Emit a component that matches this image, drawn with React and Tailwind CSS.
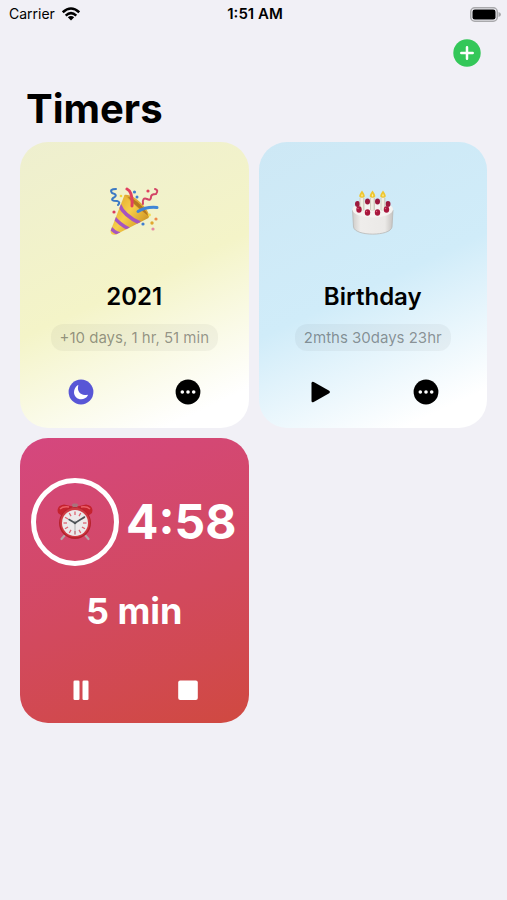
const PartyIcon = () => (
  <svg viewBox="0 0 50 50" className="size-[50px]" aria-hidden="true">
    <defs>
      <linearGradient id="cone" x1="0" y1="0.2" x2="1" y2="1">
        <stop offset="0" stopColor="#dfa52c" />
        <stop offset="0.4" stopColor="#f7cf4a" />
        <stop offset="0.7" stopColor="#dba62f" />
        <stop offset="1" stopColor="#a36f1a" />
      </linearGradient>
      <clipPath id="coneClip">
        <path d="M15.500 8 C21 7 38 22 39.500 31 L7 47.500 Q2 49 1.500 44 Z" />
      </clipPath>
    </defs>
    <path
      d="M15.500 8 C21 7 38 22 39.500 31 L7 47.500 Q2 49 1.500 44 Z"
      fill="url(#cone)"
    />
    <g clipPath="url(#coneClip)" fill="none" stroke="#a655c0" strokeWidth="3.600">
      <path d="M10 17 Q15 29 31 36" />
      <path d="M4 29 Q10 37 20 42" />
      <path d="M0 39 Q4 45 11 47" />
    </g>
    <path
      d="M15.500 8 C24 6 42 23 40 31 C36 26 23 17 15.500 8Z"
      fill="#e0a833"
    />
    <path d="M19 10 C26 11 38 23 39 29 C34 24 24 17 19 10Z" fill="#b3781f" />
    <g fill="none" strokeLinecap="round">
      <path d="M23 19 Q24 5 18 2" stroke="#e0405f" strokeWidth="3" />
      <path d="M29 24.500 Q37 19.500 48 20.500" stroke="#3f86d6" strokeWidth="3" />
      <path
        d="M7 2 Q0 2 3 6 Q10 8 4 11 Q1 14 8 14 Q12 15 9 18"
        stroke="#3b79c4"
        strokeWidth="2"
      />
      <path
        d="M46 2 Q50 3 47 7 Q42 7 42 10 Q42 14 38 12 Q33 10 34 17"
        stroke="#d24466"
        strokeWidth="2"
      />
    </g>
    <circle cx="25.500" cy="5" r="1.600" fill="#3f7ed0" />
    <circle cx="28" cy="10" r="1.500" fill="#3f7ed0" />
    <circle cx="39" cy="4" r="1.600" fill="#e0405f" />
    <circle cx="5" cy="25" r="1.600" fill="#dc3c5c" />
    <circle cx="34" cy="37" r="1.600" fill="#3f7ed0" />
    <circle cx="43" cy="36" r="1.700" fill="#e2a72e" />
    <circle cx="47" cy="32" r="1.600" fill="#ee8b4c" />
    <circle cx="44" cy="42" r="1.600" fill="#e689a3" />
    <circle cx="40.500" cy="28" r="1.400" fill="#f2dc4c" />
    <circle cx="12" cy="9" r="1.300" fill="#f2d43c" />
  </svg>
);

const Candle = ({ x }) => (
  <g transform={`translate(${x} 0)`}>
    <rect x="-2.500" y="8.500" width="5" height="13" rx="1" fill="#cfcdc0" />
    <rect x="-1.500" y="8.500" width="2.600" height="13" fill="#f0eee4" />
    <path d="M0 1.500 Q3 5.500 2.800 7.500 Q0 10 -2.800 7.500 Q-3 5.500 0 1.500Z" fill="#efc62f" />
    <path d="M0 4.500 Q1.500 6.500 0 8 Q-1.500 6.500 0 4.500Z" fill="#fdf0a0" />
  </g>
);

const backBerries = [
  [5.5, 15],
  [15.5, 12.5],
  [25.5, 12.5],
  [36, 15],
];

const frontBerries = [
  [7, 20.5],
  [15.5, 23.5],
  [25.5, 23.5],
  [34.5, 20.5],
];

const CakeIcon = () => (
  <svg viewBox="0 0 50 50" className="size-[50px]" aria-hidden="true">
    <defs>
      <linearGradient id="cake" x1="0" y1="0" x2="1" y2="0">
        <stop offset="0" stopColor="#cfccc9" />
        <stop offset="0.2" stopColor="#efedeb" />
        <stop offset="0.8" stopColor="#ebe9e7" />
        <stop offset="1" stopColor="#c6c3c0" />
      </linearGradient>
    </defs>
    <g transform="translate(4 2)">
      <path
        d="M0.500 21 L1.500 38 C3 47.500 38.500 47.500 40 38 L41 21Z"
        fill="url(#cake)"
        stroke="#b9b8b5"
        strokeWidth="0.800"
      />
      <ellipse cx="20.700" cy="20.500" rx="20.300" ry="8" fill="#f5f3f1" />
      {backBerries.map(([x, y]) => (
        <ellipse key={x} cx={x} cy={y} rx="2.500" ry="3" fill="#9c1a3e" />
      ))}
      <Candle x={10} />
      <Candle x={20.5} />
      <Candle x={31} />
      {frontBerries.map(([x, y]) => (
        <g key={x}>
          <ellipse cx={x} cy={y} rx="2.700" ry="3.200" fill="#a9173d" />
          <circle cx={x - 1} cy={y - 1} r="0.700" fill="#d8607c" />
        </g>
      ))}
    </g>
  </svg>
);

const ticks = [0, 30, 60, 90, 120, 150, 180, 210, 240, 270, 300, 330];

const AlarmIcon = () => (
  <svg viewBox="0 0 38 38" className="size-[38px]" aria-hidden="true">
    <g stroke="#b7a5a8" strokeWidth="2.200" strokeLinecap="round">
      <path d="M9 32 L5.500 36" />
      <path d="M29 32 L32.500 36" />
    </g>
    <rect x="16" y="0.500" width="6" height="4" rx="1.500" fill="#a8737b" />
    <path d="M2 10 Q0 2.500 8 1.500 L17 3.500 L6 13Z" fill="#c4222e" />
    <path d="M36 10 Q38 2.500 30 1.500 L21 3.500 L32 13Z" fill="#c4222e" />
    <path d="M4 6 Q7 3 13 4" stroke="#ec5f68" strokeWidth="1.500" fill="none" />
    <path d="M25 4 Q31 3 34 6" stroke="#ec5f68" strokeWidth="1.500" fill="none" />
    <circle cx="19" cy="20" r="16" fill="#b5222d" />
    <circle cx="19" cy="19.500" r="14.800" fill="#cf3a43" />
    <circle cx="19" cy="20" r="13" fill="#eceaea" />
    <g stroke="#df6471" strokeWidth="1.300">
      {ticks.map((angle) => (
        <path key={angle} d="M19 8.500 V12" transform={`rotate(${angle} 19 20)`} />
      ))}
    </g>
    <g stroke="#4d5356" strokeLinecap="round">
      <path d="M19 20 L13 16.500" strokeWidth="1.600" />
      <path d="M19 20 L28.500 14" strokeWidth="1.500" />
      <path d="M19 18 V31" strokeWidth="0.700" stroke="#9a9a9a" />
    </g>
    <circle cx="19" cy="20" r="1.300" fill="#4d5356" />
  </svg>
);

const WifiIcon = () => (
  <svg viewBox="0 0 18 14" className="h-[14px] w-[18px]" aria-hidden="true">
    <g fill="none" stroke="#000" strokeWidth="2.500">
      <path d="M0.800 5.300 Q9 -2.300 17.200 5.300" />
      <path d="M3.700 8.600 Q9 3.700 14.300 8.600" />
    </g>
    <path d="M9 13.500 L5.800 10.300 Q9 7.500 12.200 10.300Z" />
  </svg>
);

const BatteryIcon = () => (
  <svg viewBox="0 0 31 15" className="h-[15px] w-[31px]" aria-hidden="true">
    <rect
      x="0.750"
      y="0.750"
      width="26.500"
      height="13.500"
      rx="4"
      fill="none"
      stroke="#a9a9ac"
      strokeWidth="1.500"
    />
    <rect x="2.500" y="2.500" width="23" height="10" rx="2.300" />
    <path d="M28.500 5 Q31 5.800 31 7.500 Q31 9.200 28.500 10Z" fill="#a9a9ac" />
  </svg>
);

const PlusIcon = () => (
  <svg viewBox="0 0 28 28" className="size-7" aria-hidden="true">
    <circle cx="14" cy="14" r="13.700" fill="#34c759" />
    <path
      d="M14 8.300 V19.700 M8.300 14 H19.700"
      stroke="#fff"
      strokeWidth="2.500"
      strokeLinecap="round"
    />
  </svg>
);

const MoonIcon = () => (
  <svg viewBox="0 0 26 26" className="size-[26px]" aria-hidden="true">
    <circle cx="13" cy="13" r="12.400" fill="#5856d6" />
    <path
      d="M10.300 6.600 C8.700 11.800 12.300 17.300 19.200 15.800 C19.800 15.700 20 16.100 19.800 16.500 C18.400 19 15.800 20.300 13.200 20.300 C9.200 20.300 6 17.200 6 13.200 C6 10.300 7.500 7.600 9.700 6.200 C10.100 6 10.500 6.200 10.300 6.600Z"
      fill="#fff"
    />
  </svg>
);

const MoreIcon = () => (
  <svg viewBox="0 0 26 26" className="size-[26px]" aria-hidden="true">
    <circle cx="13" cy="13" r="12.400" />
    <circle cx="7.300" cy="13" r="1.800" fill="#fff" />
    <circle cx="13" cy="13" r="1.800" fill="#fff" />
    <circle cx="18.700" cy="13" r="1.800" fill="#fff" />
  </svg>
);

const PlayIcon = () => (
  <svg viewBox="0 0 26 26" className="size-[26px]" aria-hidden="true">
    <path d="M5.500 4.200 Q5.500 1.900 7.700 3 L23.200 11.700 Q24.900 13 23.200 14.300 L7.700 23 Q5.500 24.100 5.500 21.800Z" />
  </svg>
);

const PauseIcon = () => (
  <svg viewBox="0 0 26 26" className="size-[26px]" fill="#fff" aria-hidden="true">
    <rect x="5.500" y="3.500" width="6" height="19.500" rx="1.300" />
    <rect x="14.500" y="3.500" width="6" height="19.500" rx="1.300" />
  </svg>
);

const StopIcon = () => (
  <svg viewBox="0 0 26 26" className="size-[26px]" fill="#fff" aria-hidden="true">
    <rect x="3.200" y="3.500" width="19.600" height="19.500" rx="2" />
  </svg>
);

const IconButton = ({ label, children }) => (
  <button type="button" aria-label={label} className="justify-self-center">
    {children}
  </button>
);

const TimerCard = ({ icon, title, time, background, children }) => (
  <article
    className={`flex aspect-[4/5] flex-col rounded-[28px] px-[7px] pt-[45px] pb-[23px] ${background}`}
  >
    <div className="flex justify-center">{icon}</div>
    <h2 className="mt-11 text-center text-2xl font-semibold">{title}</h2>
    <p className="mt-[11px] self-center rounded-xl bg-black/4 px-[9px] text-[15px]/[27px] text-black/40">
      {time}
    </p>
    <div className="mt-auto grid grid-cols-2">{children}</div>
  </article>
);

const RunningCard = () => (
  <article className="flex aspect-[4/5] flex-col rounded-[28px] bg-linear-160 from-[#d5477f] to-[#d04940] px-[7px] pt-10 pb-5 text-white">
    <div className="flex items-center justify-between pr-[5px] pl-1">
      <div className="flex size-[88px] shrink-0 items-center justify-center rounded-full border-[5px] border-white">
        <AlarmIcon />
      </div>
      <span className="text-[48px]/[60px] font-bold">4:58</span>
    </div>
    <h2 className="mt-[22px] text-center text-[36px]/[46px] font-bold">5 min</h2>
    <div className="mt-auto grid grid-cols-2">
      <IconButton label="Pause">
        <PauseIcon />
      </IconButton>
      <IconButton label="Stop">
        <StopIcon />
      </IconButton>
    </div>
  </article>
);

const App = () => {
  return (
    <div className="min-h-screen bg-[#f1f0f6] font-['Inter','Liberation_Sans',sans-serif] text-black">
      <div className="grid grid-cols-3 items-center pt-1 pr-[6px] pl-[9px] text-sm/[20px]">
        <div className="flex items-center gap-[7px]">
          <span>Carrier</span>
          <WifiIcon />
        </div>
        <span className="text-center text-[15px]/[20px] font-semibold">1:51 AM</span>
        <div className="flex justify-end">
          <BatteryIcon />
        </div>
      </div>
      <header className="px-[26px]">
        <div className="flex justify-end pt-[15px]">
          <button type="button" aria-label="Add timer">
            <PlusIcon />
          </button>
        </div>
        <h1 className="mt-[17px] text-[40px]/[50px] font-bold">Timers</h1>
      </header>
      <main className="grid grid-cols-2 gap-[10px] px-5 pt-2 pb-5">
        <TimerCard
          icon={<PartyIcon />}
          title="2021"
          time="+10 days, 1 hr, 51 min"
          background="bg-linear-155 from-[#eeefcf] via-[#f4f4c8] via-50% to-white to-90%"
        >
          <IconButton label="Do not disturb">
            <MoonIcon />
          </IconButton>
          <IconButton label="More">
            <MoreIcon />
          </IconButton>
        </TimerCard>
        <TimerCard
          icon={<CakeIcon />}
          title="Birthday"
          time="2mths 30days 23hr"
          background="bg-linear-155 from-[#cde8f5] via-[#d0ecf9] via-50% to-white to-90%"
        >
          <IconButton label="Start">
            <PlayIcon />
          </IconButton>
          <IconButton label="More">
            <MoreIcon />
          </IconButton>
        </TimerCard>
        <RunningCard />
      </main>
    </div>
  );
};

export default App;
